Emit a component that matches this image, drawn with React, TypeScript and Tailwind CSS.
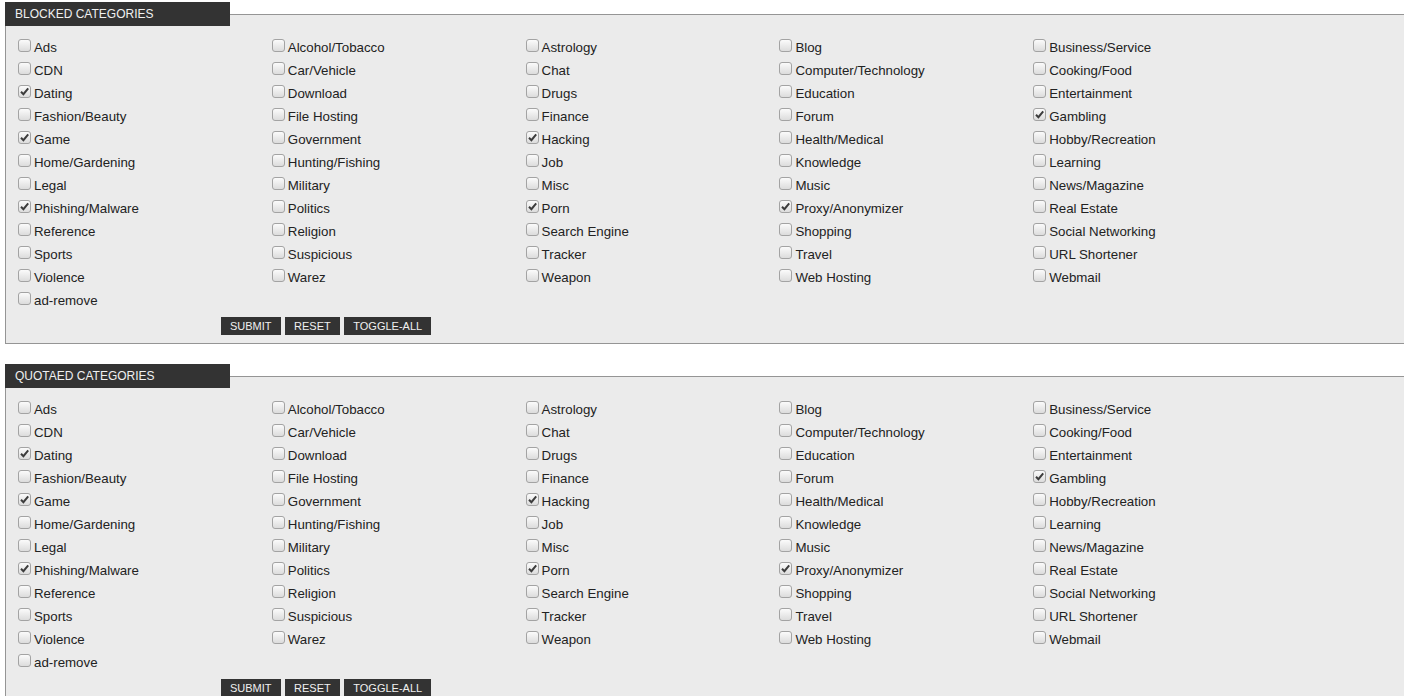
import { useState } from "react";

const CATEGORIES = [
  "Ads", "Alcohol/Tobacco", "Astrology", "Blog", "Business/Service",
  "CDN", "Car/Vehicle", "Chat", "Computer/Technology", "Cooking/Food",
  "Dating", "Download", "Drugs", "Education", "Entertainment",
  "Fashion/Beauty", "File Hosting", "Finance", "Forum", "Gambling",
  "Game", "Government", "Hacking", "Health/Medical", "Hobby/Recreation",
  "Home/Gardening", "Hunting/Fishing", "Job", "Knowledge", "Learning",
  "Legal", "Military", "Misc", "Music", "News/Magazine",
  "Phishing/Malware", "Politics", "Porn", "Proxy/Anonymizer", "Real Estate",
  "Reference", "Religion", "Search Engine", "Shopping", "Social Networking",
  "Sports", "Suspicious", "Tracker", "Travel", "URL Shortener",
  "Violence", "Warez", "Weapon", "Web Hosting", "Webmail",
  "ad-remove",
];

const DEFAULT_ON = ["Dating", "Gambling", "Game", "Hacking", "Phishing/Malware", "Porn", "Proxy/Anonymizer"];

function Check({ checked, onChange }: { checked: boolean; onChange: () => void }) {
  return (
    <span className="relative mb-[5px] inline-block h-[13px] w-[13px] shrink-0">
      <input
        type="checkbox"
        checked={checked}
        onChange={onChange}
        className="block h-[13px] w-[13px] appearance-none rounded-[3px] border border-[#a3a3a3] bg-gradient-to-b from-[#fbfbfb] to-[#dcdcdc]"
      />
      {checked && (
        <svg className="pointer-events-none absolute left-0 top-0 h-[13px] w-[13px]" viewBox="0 0 13 13">
          <path d="M3 6.8 L5.4 9.2 L10.2 3.4" fill="none" stroke="#3c3c3c" strokeWidth={2} />
        </svg>
      )}
    </span>
  );
}

function CategoryBox({ title, first }: { title: string; first?: boolean }) {
  const [on, setOn] = useState<string[]>(DEFAULT_ON);

  const toggle = (c: string) =>
    setOn((prev) => (prev.includes(c) ? prev.filter((x) => x !== c) : [...prev, c]));

  return (
    <section className={`${first ? "mt-[2px]" : "mt-[20px]"} ml-[5px] w-[1420px]`}>
      {/* legend sits on the top border */}
      <div className="relative z-10 flex h-[24px] w-[225px] items-center bg-[#333333] pl-[10px] text-[12px] text-[#f0f0f0]">
        {title}
      </div>
      <div className="-mt-[12px] border border-[#959595] bg-[#ebebeb] pl-[12px] pt-[21px] pb-[8px]">
        <div className="grid grid-cols-[repeat(5,253.8px)]">
          {CATEGORIES.map((c) => (
            <label key={c} className="flex h-[23px] cursor-pointer items-center gap-[3px] text-[13.3px] text-[#222222]">
              <Check checked={on.includes(c)} onChange={() => toggle(c)} />
              <span>{c}</span>
            </label>
          ))}
        </div>
        <div className="ml-[203px] mt-[5px] flex gap-[4px]">
          <button className="h-[18px] bg-[#333333] px-[9px] text-[11px] leading-[18px] text-[#f0f0f0]">SUBMIT</button>
          <button onClick={() => setOn(DEFAULT_ON)} className="h-[18px] bg-[#333333] px-[9.5px] text-[11px] leading-[18px] text-[#f0f0f0]">RESET</button>
          <button
            onClick={() => setOn((prev) => (prev.length === CATEGORIES.length ? [] : [...CATEGORIES]))}
            className="h-[18px] bg-[#333333] px-[9px] text-[11px] leading-[18px] text-[#f0f0f0]"
          >
            TOGGLE-ALL
          </button>
        </div>
      </div>
    </section>
  );
}

export default function App() {
  return (
    <div className="h-[696px] w-[1404px] overflow-hidden bg-white font-['Liberation_Sans',Arial,sans-serif]">
      <CategoryBox title="BLOCKED CATEGORIES" first />
      <CategoryBox title="QUOTAED CATEGORIES" />
    </div>
  );
}
